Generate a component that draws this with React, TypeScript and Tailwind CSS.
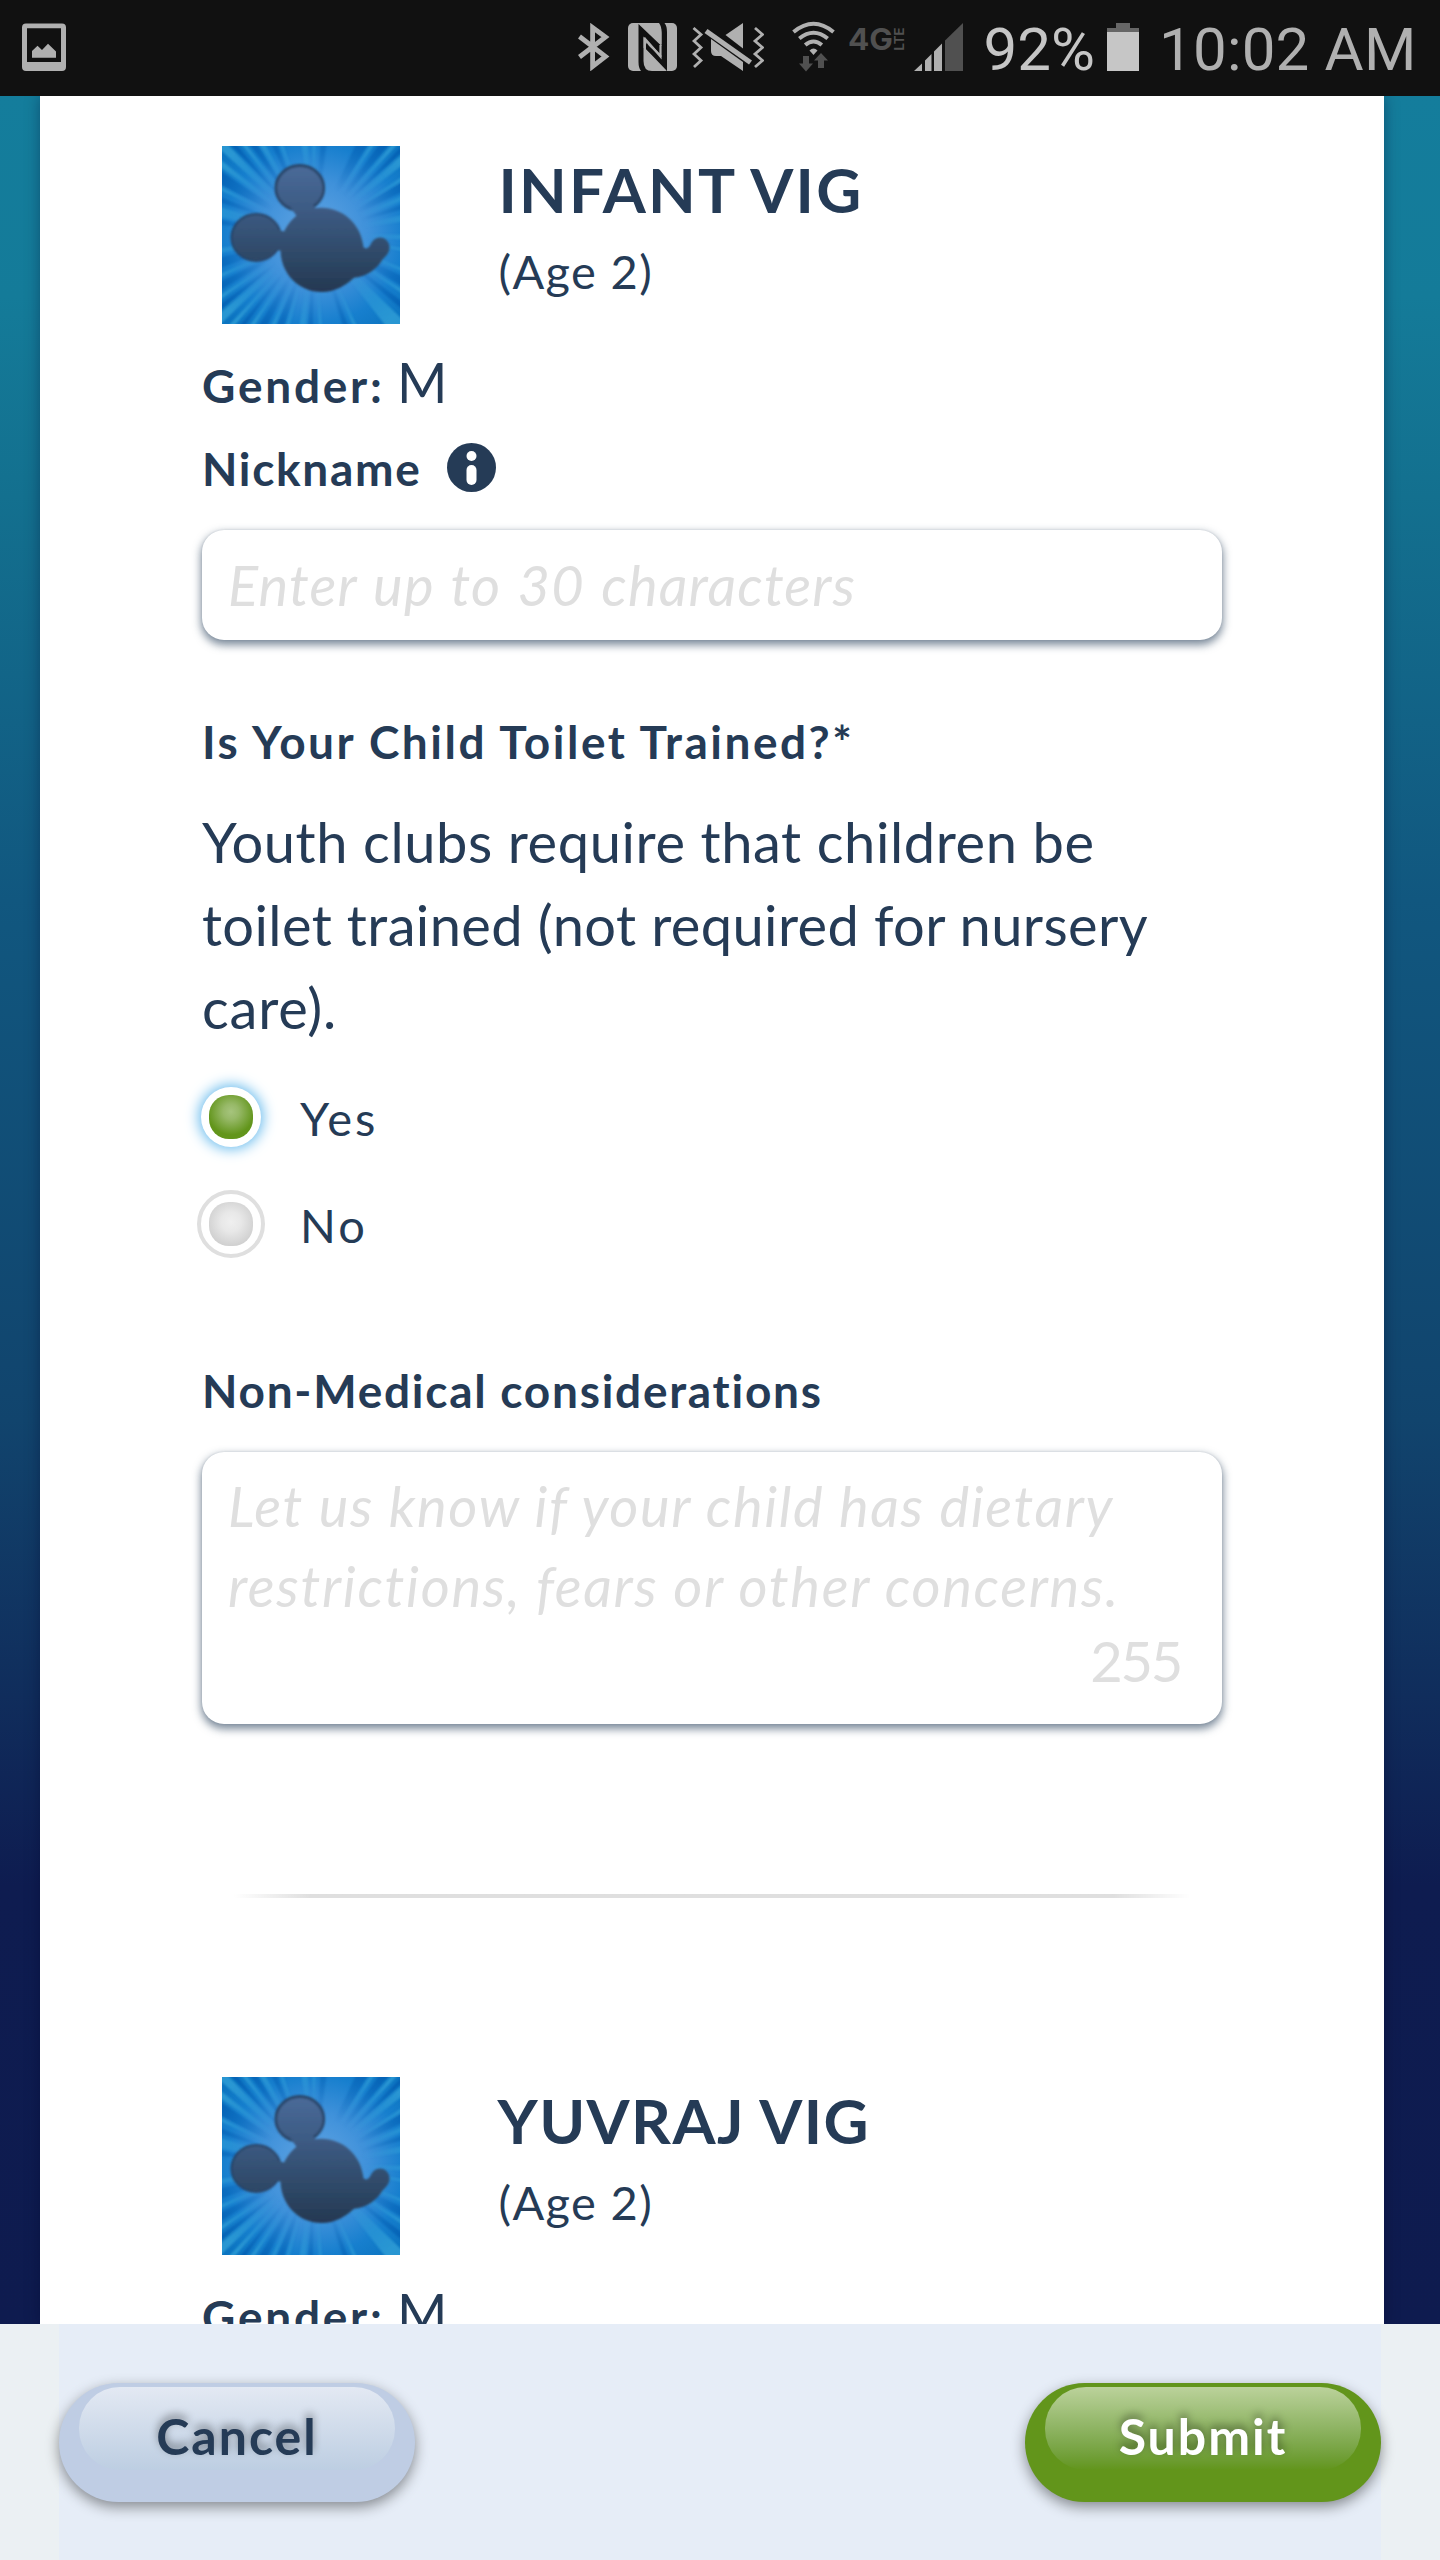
import type { ReactNode } from "react";

const CX = 92;
const CY = 88;

function wedge(angle: number, spread: number) {
  const a = ((angle - spread / 2) * Math.PI) / 180;
  const b = ((angle + spread / 2) * Math.PI) / 180;
  const r = 150;
  return `M${CX} ${CY}L${(CX + r * Math.cos(a)).toFixed(1)} ${(CY + r * Math.sin(a)).toFixed(1)}L${(CX + r * Math.cos(b)).toFixed(1)} ${(CY + r * Math.sin(b)).toFixed(1)}Z`;
}

const lightRays: [number, number][] = [
  [2, 3], [10, 2], [22, 2], [33, 2], [48, 8], [66, 2], [86, 2], [97, 4], [106, 2], [114, 2],
  [124, 2], [132, 2], [138, 4], [146, 2], [156, 2], [170, 3], [193, 6], [206, 2], [217, 3], [224, 4],
  [232, 2], [240, 3], [250, 2], [264, 4], [270, 2], [303, 2], [312, 2], [320, 4], [328, 2], [338, 3], [350, 4],
];
const darkRays: [number, number][] = [
  [28, 5], [39, 3], [71, 3], [92, 3], [110, 4], [119, 4], [128, 2], [142, 2], [151, 4], [163, 6],
  [187, 3], [200, 3], [211, 6], [228, 2], [236, 3], [246, 3], [276, 4], [298, 6], [308, 4], [316, 2], [332, 5], [343, 3],
];

function Avatar() {
  return (
    <svg className="block h-[178px] w-[178px] shrink-0" viewBox="0 0 178 178">
      <defs>
        <radialGradient id="sky" gradientUnits="userSpaceOnUse" cx={CX} cy={CY} r="120">
          <stop offset="0" stopColor="#64a6e4" />
          <stop offset="0.45" stopColor="#3f91da" />
          <stop offset="0.75" stopColor="#177fce" />
          <stop offset="1" stopColor="#0c74c0" />
        </radialGradient>
        <radialGradient id="rayFade" gradientUnits="userSpaceOnUse" cx={CX} cy={CY} r="120">
          <stop offset="0.4" stopColor="#000" />
          <stop offset="0.95" stopColor="#fff" />
        </radialGradient>
        <mask id="rayMask" maskUnits="userSpaceOnUse" x="0" y="0" width="178" height="178">
          <rect width="178" height="178" fill="url(#rayFade)" />
        </mask>
        <linearGradient id="mouse" gradientUnits="userSpaceOnUse" x1="0" y1="18" x2="0" y2="146">
          <stop offset="0" stopColor="#4a6b99" />
          <stop offset="0.35" stopColor="#3d5b84" />
          <stop offset="0.7" stopColor="#2f4a69" />
          <stop offset="1" stopColor="#253852" />
        </linearGradient>
        <filter id="soft" x="-5%" y="-5%" width="110%" height="110%">
          <feGaussianBlur stdDeviation="1" />
        </filter>
        <clipPath id="frame">
          <rect width="178" height="178" />
        </clipPath>
      </defs>
      <rect width="178" height="178" fill="url(#sky)" />
      <g clipPath="url(#frame)">
        <g mask="url(#rayMask)">
          <g filter="url(#soft)">
            {lightRays.map(([a, s]) => (
              <path key={`l${a}`} d={wedge(a, s)} fill="#3aaedd" opacity="0.6" />
            ))}
            {darkRays.map(([a, s]) => (
              <path key={`d${a}`} d={wedge(a, s)} fill="#0357ad" opacity="0.65" />
            ))}
          </g>
        </g>
      </g>
      <g filter="url(#soft)">
        <g fill="#283e5e" stroke="#283e5e" strokeWidth="1.5" opacity="0.9">
          <ellipse cx="77.8" cy="42" rx="24.6" ry="23.2" />
          <ellipse cx="34.2" cy="91.5" rx="25" ry="23.8" />
        </g>
        <g fill="url(#mouse)">
          <ellipse cx="77.8" cy="42" rx="22.5" ry="21" />
          <ellipse cx="34.2" cy="91.5" rx="23.4" ry="22.2" />
          <path d="M69 62 L90 58 L96 66 L76 72Z M56 84 L64 86 L63 105 L52 104Z" />
          <path d="M99 61.8C121 61.8 139 78 141.5 101C144 104 147.5 102 149 97.5C151 93.5 154.5 91.5 158 91.5C163.5 91.5 167.5 96 167.5 101.5C167.5 107 164 110 160.5 113.5C155 123 145 130.5 132 131.8C123 140 113 146 100 146C76 146 58.5 127 58.5 103.5C58.5 80 76 61.8 99 61.8Z" />
        </g>
      </g>
    </svg>
  );
}

function StatusBar() {
  return (
    <header className="flex h-24 shrink-0 items-start bg-[#111111] text-[#b0b0b0]">
      <svg className="mt-[23px] ml-[22px] h-[48px] w-[44px]" viewBox="22 23 44 48" fill="currentColor">
        <path fillRule="evenodd" d="M26 23.5H62a4 4 0 0 1 4 4V67a4 4 0 0 1-4 4H26a4 4 0 0 1-4-4V27.5a4 4 0 0 1 4-4ZM27 28.3V62H61V28.3Z" />
        <path d="M32 57.7V51L37.5 45.7L42 50L48 43.7L56 51.5V57.7Z" />
      </svg>
      <svg className="mt-[23px] ml-[511px] h-[48px] w-[33px]" viewBox="577 23 33 48" fill="none" stroke="currentColor" strokeWidth="4.8">
        <path d="M579.5 36.5L605.5 56.5L592.6 66.5V27.5L605.5 37L579.5 57" />
      </svg>
      <svg className="mt-[23px] ml-[18px] h-[48px] w-[49px]" viewBox="628 23 49 48">
        <rect x="628" y="23" width="49" height="48" rx="5" fill="currentColor" />
        <path d="M638.5 24V62Q638.5 68 641 71H667V32Q667 26 664.5 23H659Q661.5 26 661.5 32V46Z" fill="#111111" />
        <path d="M639.5 23H652Q661.5 23 661.5 33V44.5Z" fill="currentColor" />
        <path fillRule="evenodd" d="M643.5 36.5L661.5 55.5V57L646 43.5V49L666.5 70.5V71H652Q643.5 71 643.5 61Z" fill="currentColor" />
        <path d="M644.7 37.5V48M644.7 38.5L660.5 56.5V45" fill="none" stroke="currentColor" strokeWidth="2.2" />
        <path d="M646.5 42.5V49.500L659 61Z" fill="#111111" />
      </svg>
      <svg className="mt-[23px] ml-[15px] h-[48px] w-[72px]" viewBox="692 23 72 48" fill="currentColor">
        <path d="M743 23V48.5L725.5 35Z" />
        <path d="M711 39L743 62V71L721 56H716Q711 56 711 51Z" />
        <path d="M706 31L750.5 62.5" stroke="currentColor" strokeWidth="5.2" />
        <path d="M693.5 28L701 34.5L694 41L701 47.5L694 54L701 60.5L694 67M755 28L762.5 34.5L755 41L762.5 47.5L755 54L762.5 60.5L755 67" fill="none" stroke="currentColor" strokeWidth="2.8" />
      </svg>
      <svg className="mt-[21px] ml-[28px] h-[51px] w-[43px]" viewBox="792 21 43 51" fill="none" stroke="currentColor" strokeWidth="4">
        <path d="M793.5 32Q813.5 15.5 833.5 32M799.3 38.5Q813.5 27 827.7 38.5M805.2 45Q813.5 38 821.8 45" />
        <path d="M813.5 55L809.5 50.5Q813.5 46.5 817.5 50.5Z" fill="currentColor" stroke="none" />
        <path d="M803 56H809V63.5H813L806 71.5L799 63.5H803ZM818 68H824V60.5H828L821 53L814 60.5H818Z" fill="#505050" stroke="none" />
      </svg>
      <svg className="mt-[23px] ml-[14px] h-[32px] w-[56px] overflow-visible" viewBox="849 23 56 32" fill="#505050">
        <text x="848" y="50" fontFamily="Inter" fontWeight="700" fontSize="30" textLength="45" lengthAdjust="spacingAndGlyphs">4G</text>
        <text transform="translate(903.5 50.5) rotate(-90)" fontFamily="Inter" fontWeight="700" fontSize="12.5" textLength="23" lengthAdjust="spacingAndGlyphs">LTE</text>
      </svg>
      <svg className="mt-[23px] ml-[9px] h-[48px] w-[49px]" viewBox="914 23 49 48" fill="currentColor">
        <path d="M914 71L922 63.5V71ZM925 71V60.5L931.5 54V71ZM934 71V51.5L942 43.5V71Z" />
        <path d="M945 71V40.5L963 23V71Z" fill="#505050" />
      </svg>
      <span className="mt-[1px] ml-[20.5px] w-[112px] font-['Roboto'] text-[60px] leading-[97px] text-[#c6c6c6]">92%</span>
      <svg className="mt-[23px] ml-[11.5px] h-[48px] w-[32px] shrink-0" viewBox="1107 23 32 48">
        <path d="M1116 23H1130V28H1139V33H1107V28H1116Z" fill="#666" />
        <rect x="1107" y="32" width="32" height="39" fill="#c6c6c6" />
      </svg>
      <span className="mt-[1px] ml-[20px] font-['Roboto'] text-[60px] leading-[97px] tracking-[0.22px] whitespace-nowrap">10:02 AM</span>
    </header>
  );
}

function Radio({ checked, children }: { checked?: boolean; children: ReactNode }) {
  return (
    <label className="-ml-[5px] flex h-[68px] items-center">
      <span
        className={
          checked
            ? "m-[4px] flex h-[60px] w-[60px] items-center justify-center rounded-full bg-white shadow-[0_0_14px_2px_#62b8ec]"
            : "flex h-[68px] w-[68px] items-center justify-center rounded-full border-4 border-[#dfdfdf] bg-white"
        }
      >
        <span
          className={
            checked
              ? "h-[44px] w-[44px] rounded-[20px] bg-[radial-gradient(circle_at_50%_38%,#a6c47d_0%,#97b968_22%,#62951b_66%)]"
              : "h-[44px] w-[44px] rounded-[20px] bg-[radial-gradient(circle_at_50%_45%,#efefef_0%,#e8e8e8_30%,#cdcdcd_80%)]"
          }
        />
      </span>
      {children}
    </label>
  );
}

const label = "font-bold text-[46px] leading-[60px]";
const field = "rounded-[22px] bg-white text-[56px] text-[#dfdfdf] shadow-[0_4px_9px_1px_rgba(37,62,88,0.6),0_0_2px_rgba(37,62,88,0.15)]";

function Guest({ name, children }: { name: ReactNode; children?: ReactNode }) {
  return (
    <section>
      <div className="flex pl-[19.5px]">
        <Avatar />
        <div className="pt-[5px] pl-[99px]">
          <h2 className="text-[62px] leading-[76px] font-bold whitespace-nowrap">{name}</h2>
          <p className="mt-[14px] text-[47px] leading-[60px] tracking-[1.36px]">(Age 2)</p>
        </div>
      </div>
      <p className="mt-[24px] h-[67px] text-[56px] leading-[68px]">
        <span className="text-[46px] leading-none font-bold tracking-[2.76px]">Gender:</span>
        <span className="ml-[12px] inline-block origin-left scale-x-[0.97] leading-none">M</span>
      </p>
      {children}
    </section>
  );
}

function InfoIcon() {
  return (
    <svg className="-mt-[3px] ml-[25px] h-[49px] w-[49px]" viewBox="0 0 49 49">
      <circle cx="24.5" cy="24.5" r="24.5" fill="#253b56" />
      <circle cx="24.5" cy="13" r="5" fill="#fff" />
      <rect x="19.5" y="22" width="10" height="20" rx="5" fill="#fff" />
    </svg>
  );
}

function GlossButton({ kind, children }: { kind: "cancel" | "submit"; children: ReactNode }) {
  const submit = kind === "submit";
  return (
    <button
      className={
        submit
          ? "relative flex h-[119px] w-[356px] items-center justify-center rounded-full bg-[#62951b] pb-[13px] text-white shadow-[0_5px_14px_rgba(0,0,0,0.42)]"
          : "relative flex h-[119px] w-[356px] items-center justify-center rounded-full bg-[#bfcde4] pb-[13px] text-[#253b56] shadow-[0_5px_14px_rgba(0,0,0,0.42)]"
      }
    >
      <span
        className={
          submit
            ? "absolute top-[4px] left-[20px] h-[83px] w-[316px] rounded-[41px] bg-linear-to-b from-[#bbd29b] to-[#62951b]"
            : "absolute top-[4px] left-[20px] h-[83px] w-[316px] rounded-[41px] bg-linear-to-b from-[#e3e9f3] to-[#bdcee2]"
        }
      />
      <span className="relative text-[50px] leading-[60px] font-bold tracking-[2px] [text-shadow:0_-4px_8px_rgba(0,0,0,0.4)]">{children}</span>
    </button>
  );
}

export default function App() {
  return (
    <div className="flex h-[2560px] w-[1440px] flex-col overflow-hidden font-['Lato',sans-serif] text-[#253b56]">
      <StatusBar />
      <main className="h-[2228px] shrink-0 overflow-hidden bg-[linear-gradient(to_bottom,#147d9c_0px,#147b99_200px,#13708f_400px,#11577f_804px,#11446d_1324px,#102d5c_1600px,#0e1c50_1790px,#0e1b4f_2228px)] pr-[56px] pl-[40px]">
        <div className="h-full bg-white px-[162px] pt-[50px] shadow-[0_0_14px_rgba(0,0,40,0.35)]">
          <Guest name={<span className="tracking-[2.2px]">INFANT VIG</span>}>
            <div className="mt-[24px] flex items-center">
              <span className={`${label} tracking-[1.7px]`}>Nickname</span>
              <InfoIcon />
            </div>
            <div className={`${field} mt-[31px] h-[110px] pl-[26px] leading-[109px] tracking-[1.2px] italic [word-spacing:2px]`}>Enter up to 30 characters</div>

            <p className={`${label} mt-[72px] tracking-[2.5px]`}>Is Your Child Toilet Trained?*</p>
            <p className="mt-[28px] text-[56px] leading-[83px] whitespace-nowrap">
              <span className="block tracking-[0.6px]">Youth clubs require that children be</span>
              <span className="block tracking-[0.39px]">toilet trained (not required for nursery</span>
              <span className="block tracking-[0.79px]">care).</span>
            </p>
            <div className="mt-[34px] flex flex-col gap-[39px] text-[47px] leading-[60px] tracking-[3px]">
              <Radio checked>
                <span className="ml-[35px] pt-px">Yes</span>
              </Radio>
              <Radio>
                <span className="ml-[35px] pt-px">No</span>
              </Radio>
            </div>

            <p className={`${label} mt-[103px] tracking-[1.74px]`}>Non-Medical considerations</p>
            <div className={`${field} mt-[31px] h-[272px] pt-[14px] pl-[26px] leading-[80px] whitespace-nowrap`}>
              <p className="tracking-[1.65px] italic">Let us know if your child has dietary</p>
              <p className="tracking-[1.7px] italic">restrictions, fears or other concerns.</p>
              <p className="mt-[5px] pr-[41px] text-right leading-[60px] tracking-[-2.23px]">255</p>
            </div>
          </Guest>
          <hr className="mx-[32px] mt-[170px] mb-[179px] h-[4px] border-0 bg-linear-to-r from-transparent from-[0%] via-[#dfdfdf] via-[8%] to-[#dfdfdf] to-[92%] mask-r-from-92%" />
          <Guest name={<span className="-ml-px tracking-[1.45px]">YUVRAJ VIG</span>} />
        </div>
      </main>
      <footer className="h-[236px] shrink-0 bg-[#ebf0f3] px-[59px]">
        <div className="flex h-full items-start justify-between bg-[#e6edf7] pt-[59px]">
          <GlossButton kind="cancel">Cancel</GlossButton>
          <GlossButton kind="submit">Submit</GlossButton>
        </div>
      </footer>
    </div>
  );
}
